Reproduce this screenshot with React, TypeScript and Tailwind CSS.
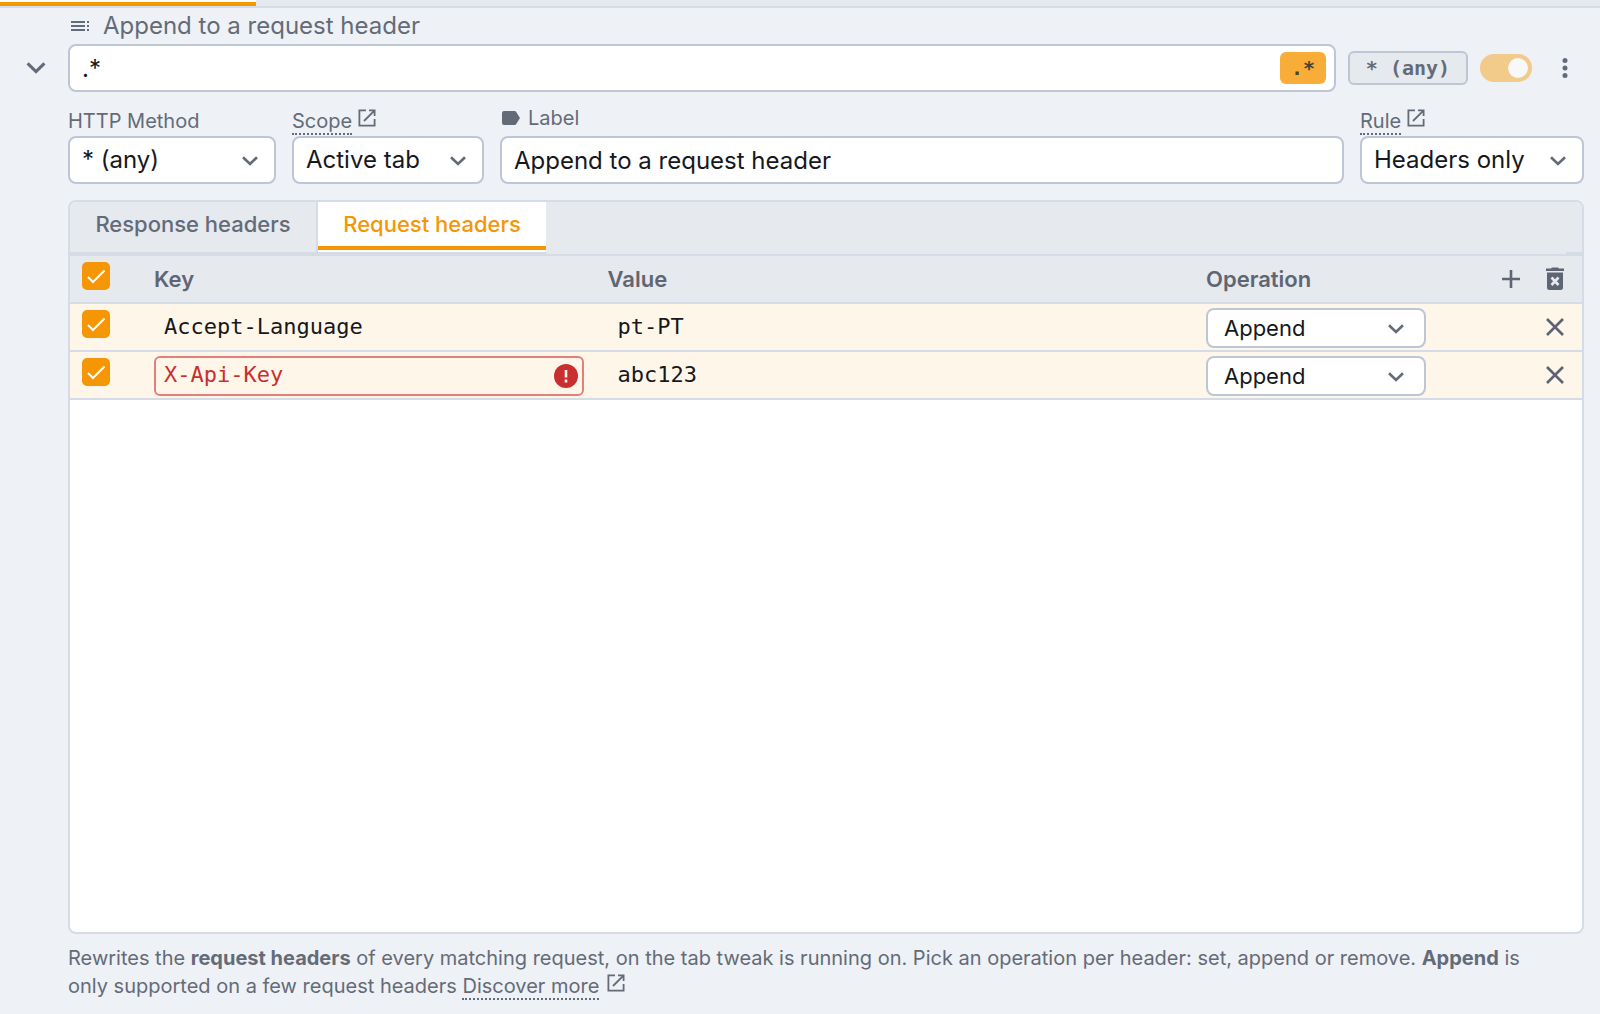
import { useState } from "react";
import type { ReactNode } from "react";

const field =
  "h-12 w-full rounded-lg border-2 border-[#bec6d6] bg-white text-[#16181c] outline-none";

function Chevron({ className = "" }: { className?: string }) {
  return (
    <svg viewBox="0 0 16 10" fill="none" stroke="currentColor" strokeWidth="2.6" className={className} aria-hidden="true">
      <path d="M1 1.2 8 8l7-6.8" />
    </svg>
  );
}

function OpenIcon() {
  return (
    <svg viewBox="0 0 18 18" fill="none" stroke="currentColor" strokeWidth="1.8" className="size-[18px]" aria-hidden="true">
      <path d="M8 1.4H1.4v15.2h15.2V10M11 1.4h5.6V7M16.4 1.6 6 12" />
    </svg>
  );
}

function HelpLink({ children }: { children: ReactNode }) {
  return (
    <a href="#docs" className="flex items-start gap-1.5">
      <span className="border-b-2 border-dotted border-[#646b78] leading-6">{children}</span>
      <OpenIcon />
    </a>
  );
}

function Select({ id, options }: { id: string; options: string[] }) {
  return (
    <div className="relative">
      <select id={id} className={`${field} appearance-none pr-12 pl-3 text-2xl`}>
        {options.map((o) => (
          <option key={o}>{o}</option>
        ))}
      </select>
      <Chevron className="pointer-events-none absolute top-5 right-[18px] h-[10px] w-4 text-[#646b78]" />
    </div>
  );
}

function CheckBox({ label }: { label: string }) {
  return (
    <span className="relative block size-7">
      <input
        type="checkbox"
        defaultChecked
        aria-label={label}
        className="peer block size-7 appearance-none rounded-[5px] border-2 border-[#bec6d6] bg-white checked:border-[#f59607] checked:bg-[#f59607]"
      />
      <svg
        viewBox="0 0 28 28"
        fill="none"
        stroke="white"
        strokeWidth="2"
        className="pointer-events-none absolute inset-0 hidden size-7 peer-checked:block"
        aria-hidden="true"
      >
        <path d="m6 15 5 5L22.500 8.500" />
      </svg>
    </span>
  );
}

const rows = [
  { key: "Accept-Language", value: "pt-PT", invalid: false },
  { key: "X-Api-Key", value: "abc123", invalid: true },
];

const cell = "border-b-2 border-[#d5dce6] p-0 align-top";
const mono = "font-['DejaVu_Sans_Mono',monospace]";

function HeaderTable() {
  return (
    <table className="w-full table-fixed border-separate border-spacing-0 text-left">
      <colgroup>
        <col className="w-[84px]" />
        <col className="w-[30%]" />
        <col />
        <col className="w-[220px]" />
        <col className="w-[156px]" />
      </colgroup>
      <thead>
        <tr className="h-12 bg-[#e6e9ee] text-[22px] leading-[46px] text-[#5f6673]">
          <th className={`${cell} pt-1.5 pl-3`}>
            <CheckBox label="Enable all headers" />
          </th>
          <th className={`${cell} font-semibold`}>Key</th>
          <th className={`${cell} font-semibold`}>Value</th>
          <th className={`${cell} font-semibold`}>Operation</th>
          <th className={cell}>
            <div className="flex h-[46px] items-center justify-end gap-[26px] pr-[18px]">
              <button type="button" aria-label="Add header">
                <svg viewBox="0 0 18 18" stroke="currentColor" strokeWidth="2.600" className="size-[18px]">
                  <path d="M9 0v18M0 9h18" />
                </svg>
              </button>
              <button type="button" aria-label="Remove all headers">
                <svg viewBox="0 0 18 24" fill="currentColor" className="h-6 w-[18px]">
                  <path d="M0 1.500h5L6 .5h6l1 1h5V4H0z" />
                  <path d="M1 5.500h16V20.500a2.500 2.500 0 0 1-2.500 2.500h-11A2.500 2.500 0 0 1 1 20.500z" />
                  <path d="m5.500 10.500 7 7.500M12.500 10.500l-7 7.500" stroke="#e6e9ee" strokeWidth="2.600" />
                </svg>
              </button>
            </div>
          </th>
        </tr>
      </thead>
      <tbody>
        {rows.map((r) => (
          <tr key={r.key} className="h-12 bg-[#fff6ea]">
            <td className={`${cell} pt-1.5 pl-3`}>
              <CheckBox label={`Enable ${r.key}`} />
            </td>
            <td className={`${cell} pt-1 pr-6`}>
              <div className="relative">
                <input
                  aria-label="Key"
                  aria-invalid={r.invalid}
                  defaultValue={r.key}
                  className={`h-10 w-full rounded-md border-2 bg-transparent px-2 pb-1 text-[22px] outline-none ${mono} ${
                    r.invalid ? "border-[#e27f7c] text-[#c92f2f]" : "border-transparent text-[#16181c]"
                  }`}
                />
                {r.invalid && (
                  <svg viewBox="0 0 24 24" className="absolute top-2 right-1.5 size-6" role="img" aria-label="Unsupported header">
                    <circle cx="12" cy="12" r="12" fill="#c92f2f" />
                    <path d="M12 6v7.500M12 15.500v3" stroke="#fff6ea" strokeWidth="2.600" />
                  </svg>
                )}
              </div>
            </td>
            <td className={`${cell} pt-1 pr-6`}>
              <input
                aria-label="Value"
                defaultValue={r.value}
                className={`h-10 w-full rounded-md border-2 border-transparent bg-transparent px-2 pb-1 text-[22px] text-[#16181c] outline-none ${mono}`}
              />
            </td>
            <td className={`${cell} pt-1`}>
              <div className="relative">
                <select
                  aria-label="Operation"
                  defaultValue="Append"
                  className="block h-10 w-full appearance-none rounded-lg border-2 border-[#bec6d6] bg-white pl-4 text-[22px] text-[#16181c] outline-none"
                >
                  <option>Set</option>
                  <option>Append</option>
                  <option>Remove</option>
                </select>
                <Chevron className="pointer-events-none absolute top-4 right-[22px] h-[10px] w-4 text-[#646b78]" />
              </div>
            </td>
            <td className={cell}>
              <div className="flex h-[46px] items-center justify-end pr-[18px]">
                <button type="button" aria-label={`Remove ${r.key}`} className="text-[#5d6370]">
                  <svg viewBox="0 0 18 18" stroke="currentColor" strokeWidth="2.600" className="size-[18px]">
                    <path d="m1 1 16 16M17 1 1 17" />
                  </svg>
                </button>
              </div>
            </td>
          </tr>
        ))}
      </tbody>
    </table>
  );
}

export default function App() {
  const [on, setOn] = useState(true);
  return (
    <div className="flex min-h-screen flex-col bg-[#eef1f5] font-[Inter,sans-serif] text-[#646b78]">
      <div className="h-2 border-b-2 border-[#d5dce6] bg-[#e6e9ee]">
        <div className="h-1.5 w-64 border-t-2 border-white bg-[#f59607]" />
      </div>

      <div className="flex flex-1 flex-col pr-4 pl-[68px]">
        <h1 className="flex h-9 items-center gap-3.5 pl-[3px] text-2xl">
          <svg viewBox="0 0 18 10" fill="currentColor" className="h-[10px] w-[18px]" aria-hidden="true">
            <path d="M0 0h14v2H0zM0 4h14v2H0zM0 8h14v2H0zM16 0h2v2h-2zM16 4h2v2h-2zM16 8h2v2h-2z" />
          </svg>
          Append to a request header
        </h1>

        <div className="mr-2.5 -ml-[42px] flex items-center">
          <button type="button" aria-label="Collapse" className="w-[42px]">
            <Chevron className="h-3 w-5" />
          </button>
          <div className="relative flex-1">
            <input aria-label="URL pattern" defaultValue=".*" className={`${field} block pr-16 pl-3 text-2xl`} />
            <button
              type="button"
              aria-label="Regular expression"
              className={`absolute top-2 right-2.5 h-8 w-[46px] rounded-md bg-[#f7ad38] text-xl font-bold text-[#4a4232] ${mono}`}
            >
              .*
            </button>
          </div>
          <button
            type="button"
            className={`ml-3 h-[34px] w-[120px] rounded-md border-2 border-[#bec6d6] bg-[#e6e9ee] text-xl leading-7 font-bold ${mono}`}
          >
            * (any)
          </button>
          <label className="relative ml-3 block h-7 w-[52px]">
            <input
              type="checkbox"
              role="switch"
              aria-label="Enabled"
              checked={on}
              onChange={() => setOn(!on)}
              className="peer block h-7 w-[52px] appearance-none rounded-full bg-[#c9cfda] checked:bg-[#f2ca8a]"
            />
            <span className="absolute top-1 left-1 size-5 rounded-full bg-[#f8f8fa] peer-checked:left-7" />
          </label>
          <button type="button" aria-label="More" className="ml-6 w-[18px]">
            <svg viewBox="0 0 18 20" fill="currentColor" className="h-5 w-[18px]">
              <circle cx="9" cy="2.500" r="2.500" />
              <circle cx="9" cy="10" r="2.500" />
              <circle cx="9" cy="17.500" r="2.500" />
            </svg>
          </button>
        </div>

        <div className="mt-4 grid grid-cols-[208px_192px_1fr_224px] gap-x-4 text-xl">
          <div>
            <label htmlFor="method" className="block h-7 pt-px leading-6">
              HTTP Method
            </label>
            <Select id="method" options={["* (any)", "GET", "POST"]} />
          </div>
          <div>
            <label htmlFor="scope" className="flex h-7 items-start pt-px">
              <HelpLink>Scope</HelpLink>
            </label>
            <Select id="scope" options={["Active tab", "All tabs"]} />
          </div>
          <div>
            <label htmlFor="label" className="flex h-7 items-center gap-2 pb-2 pl-0.5">
              <svg viewBox="0 0 18 14" fill="currentColor" className="h-[14px] w-[18px]" aria-hidden="true">
                <path d="M2 0h10.500a2 2 0 0 1 1.600.8L18 7l-3.900 6.200a2 2 0 0 1-1.600.8H2a2 2 0 0 1-2-2V2a2 2 0 0 1 2-2z" />
              </svg>
              Label
            </label>
            <input id="label" defaultValue="Append to a request header" className={`${field} block px-3 text-2xl`} />
          </div>
          <div>
            <label htmlFor="rule" className="flex h-7 items-start pt-px">
              <HelpLink>Rule</HelpLink>
            </label>
            <Select id="rule" options={["Headers only", "Payload", "Redirect"]} />
          </div>
        </div>

        <section className="mt-4 flex-1 overflow-hidden rounded-lg border-2 border-[#d5dce6] bg-white">
          <div
            role="tablist"
            className="flex h-[54px] items-start justify-between border-b-2 border-[#d5dce6] bg-[#e6e9ee] text-[22px] font-medium"
          >
            <div className="flex border-b-2 border-[#d5dce6]">
              <button type="button" role="tab" aria-selected="false" className="h-[50px] w-[248px] border-r-2 border-[#d5dce6] pb-1.5">
                Response headers
              </button>
              <button type="button" role="tab" aria-selected="true" className="flex h-[50px] w-[228px] flex-col bg-white text-[#f59607]">
                <span className="h-12 w-full border-b-4 border-[#f59607] leading-[44px]">Request headers</span>
              </button>
            </div>
            <div className="h-full w-4 border-b-2 border-[#d5dce6]" />
          </div>
          <HeaderTable />
        </section>

        <p className="pt-2.5 pr-6 pb-3.5 text-xl leading-7">
          Rewrites the <b>request headers</b> of every matching request, on the tab tweak is running on. Pick an operation per
          header: set, append or remove. <b>Append</b> is only supported on a few request headers{" "}
          <a href="#discover" className="inline-flex items-start gap-2">
            <span className="border-b-2 border-dotted border-[#646b78] leading-6">Discover more</span>
            <OpenIcon />
          </a>
        </p>
      </div>
    </div>
  );
}
